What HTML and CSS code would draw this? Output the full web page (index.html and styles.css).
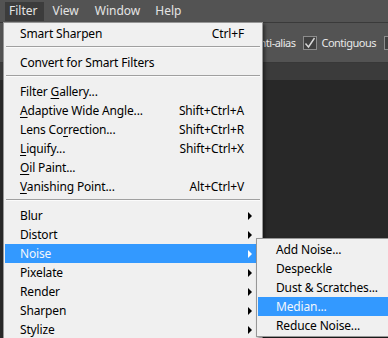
FILE: index.html
```html
<!DOCTYPE html>
<html>
  <head>
    <title>Filter Menu</title>
    <link rel="stylesheet" href="styles.css">
  </head>
  <body>
    <div class="app">
      <div class="menubar">
        <div class="menubar-item open">Filter</div>
        <div class="menubar-item">View</div>
        <div class="menubar-item">Window</div>
        <div class="menubar-item">Help</div>
      </div>

      <div class="options-bar">
        <span class="option-label">Anti-alias</span>
        <label class="option-check">
          <span class="checkbox checked">
            <svg width="12" height="12" viewBox="0 0 12 12">
              <path d="M1.5 6.5 L4.5 10 L10.5 1" fill="none" stroke="#d8d8d8" stroke-width="1.4" />
            </svg>
          </span>
          Contiguous
        </label>
        <span class="checkbox"></span>
      </div>

      <div class="tab-bar"></div>
      <div class="canvas"></div>

      <!-- Filter menu -->
      <div class="menu main-menu">
        <div class="menu-item"><span>Smart Sharpen</span><span class="shortcut">Ctrl+F</span></div>
        <div class="menu-sep"></div>
        <div class="menu-item"><span>Convert for Smart Filters</span></div>
        <div class="menu-sep"></div>
        <div class="menu-item"><span>Filter <u>G</u>allery...</span></div>
        <div class="menu-item"><span><u>A</u>daptive Wide Angle...</span><span class="shortcut">Shift+Ctrl+A</span></div>
        <div class="menu-item"><span>Lens Co<u>r</u>rection...</span><span class="shortcut">Shift+Ctrl+R</span></div>
        <div class="menu-item"><span><u>L</u>iquify...</span><span class="shortcut">Shift+Ctrl+X</span></div>
        <div class="menu-item"><span><u>O</u>il Paint...</span></div>
        <div class="menu-item"><span><u>V</u>anishing Point...</span><span class="shortcut">Alt+Ctrl+V</span></div>
        <div class="menu-sep"></div>
        <div class="menu-item sub"><span>Blur</span></div>
        <div class="menu-item sub"><span>Distort</span></div>
        <div class="menu-item sub active"><span>Noise</span></div>
        <div class="menu-item sub"><span>Pixelate</span></div>
        <div class="menu-item sub"><span>Render</span></div>
        <div class="menu-item sub"><span>Sharpen</span></div>
        <div class="menu-item sub"><span>Stylize</span></div>
      </div>

      <!-- Noise submenu -->
      <div class="menu sub-menu">
        <div class="menu-item"><span>Add Noise...</span></div>
        <div class="menu-item"><span>Despeckle</span></div>
        <div class="menu-item"><span>Dust &amp; Scratches...</span></div>
        <div class="menu-item active"><span>Median...</span></div>
        <div class="menu-item"><span>Reduce Noise...</span></div>
      </div>
    </div>
  </body>
</html>
```

FILE: styles.css
```css
body {
  margin: 0;
  font-family: "Noto Sans", "Open Sans", sans-serif;
  font-size: 12px;
}

.app {
  position: relative;
  width: 388px;
  height: 338px;
  overflow: hidden;
  display: flex;
  flex-direction: column;
  background-color: #282828;
}

.menubar {
  height: 22px;
  flex: none;
  display: flex;
  align-items: center;
  padding-left: 5px;
  background-color: #535353;
  border-bottom: 1px solid #3a3a3a;
}

.menubar-item {
  height: 19px;
  line-height: 18px;
  padding: 0 8px;
  color: #e4e4e4;
  white-space: nowrap;
}

.menubar-item.open {
  background-color: #3c3c3c;
  padding-left: 4px;
  padding-right: 7px;
}

.menubar-item:last-child {
  padding-left: 7px;
}

.options-bar {
  height: 39px;
  flex: none;
  display: flex;
  align-items: center;
  gap: 8px;
  padding-left: 253px;
  background-color: #535353;
  border-bottom: 1px solid #383838;
  color: #e8e8e8;
  font-size: 11px;
  letter-spacing: -0.5px;
  white-space: nowrap;
}

.option-check {
  display: flex;
  align-items: center;
  gap: 4px;
}

.checkbox {
  width: 12px;
  height: 12px;
  flex: none;
  display: flex;
  align-items: center;
  justify-content: center;
  background-color: #404040;
  border: 1px solid #8c8c8c;
}

.tab-bar {
  height: 17px;
  flex: none;
  background-color: #3b3b3b;
}

.canvas {
  flex: 1;
}

.menu {
  position: absolute;
  background-color: #f0f0f0;
  border: 1px solid #979797;
  padding: 1px;
  box-shadow: 2px 2px 3px rgba(0, 0, 0, 0.45);
  color: #000;
  letter-spacing: -0.15px;
  white-space: nowrap;
}

.main-menu {
  left: 3px;
  top: 22px;
  width: 256px;
}

.sub-menu {
  left: 256px;
  top: 238px;
  width: 150px;
}

.menu-item {
  height: 19px;
  display: flex;
  align-items: center;
  justify-content: space-between;
  padding: 0 17px 0 15px;
  position: relative;
  line-height: 19px;
}

.sub-menu .menu-item {
  padding-left: 18px;
}

.menu-item u {
  text-decoration-thickness: 1px;
  text-underline-offset: 2px;
}

.menu-item.sub::after {
  content: "";
  position: absolute;
  right: 9px;
  top: 6px;
  border-left: 4px solid #000;
  border-top: 4px solid transparent;
  border-bottom: 4px solid transparent;
}

.menu-item.active {
  background-color: #3399ff;
  color: #f2f6fb;
}

.menu-item.sub.active::after {
  border-left-color: #fff;
}

.menu-sep {
  height: 0;
  margin: 3px 1px 5px;
  border-top: 1px solid #a0a0a0;
  border-bottom: 1px solid #fbfbfb;
}
```
